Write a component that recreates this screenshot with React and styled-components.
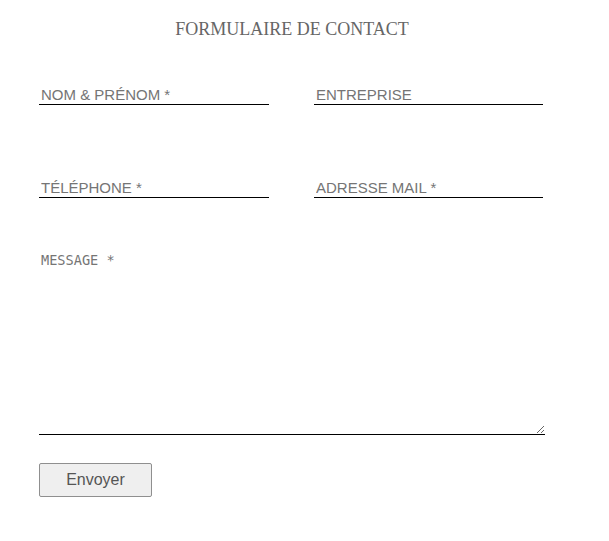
import React from 'react';
import styled, { createGlobalStyle } from 'styled-components';

const GlobalStyle = createGlobalStyle`
body {
  margin: 0;
  background: #fff;
}
`;

const Page = styled.div`
width: 506px;
padding: 17px 0 0 39px;
`;

const Title = styled.h1`
margin: 0;
font-family: "Liberation Serif", "Times New Roman", serif;
font-weight: normal;
font-size: 18px;
line-height: 24px;
color: #666;
text-align: center;
`;

const Form = styled.form`
display: flex;
flex-direction: column;
margin-top: 43px;
`;

const Row = styled.div`
display: grid;
grid-template-columns: 230px 229px;
column-gap: 45px;
margin-bottom: 72px;
`;

const Field = styled.input`
box-sizing: border-box;
width: 100%;
height: 21px;
padding: 0 2px;
border: none;
border-bottom: 1px solid #000;
outline: none;
font-family: "Liberation Sans", Arial, sans-serif;
font-size: 15px;
color: #222;
background: transparent;
&::placeholder {
  color: #757575;
}
`;

const Message = styled.textarea`
box-sizing: border-box;
width: 506px;
height: 187px;
margin-top: -22px;
padding: 4px 2px;
border: none;
border-bottom: 1px solid #000;
outline: none;
font-family: "DejaVu Sans Mono", monospace;
font-size: 13.6px;
color: #222;
&::placeholder {
  color: #757575;
}
`;

const Submit = styled.button`
align-self: flex-start;
width: 113px;
height: 34px;
margin-top: 28px;
border: 1px solid #8f8f8f;
border-radius: 2px;
background: #efefef;
font-family: "Liberation Sans", Arial, sans-serif;
font-size: 16px;
color: #555;
`;

export default function App() {
  return (
    <>
      <GlobalStyle />
      <Page>
        <Title>FORMULAIRE DE CONTACT</Title>
        <Form onSubmit={e => e.preventDefault()}>
          <Row>
            <Field placeholder="NOM & PRÉNOM *" />
            <Field placeholder="ENTREPRISE" />
          </Row>
          <Row>
            <Field placeholder="TÉLÉPHONE *" />
            <Field placeholder="ADRESSE MAIL *" />
          </Row>
          <Message placeholder="MESSAGE *" />
          <Submit type="submit">Envoyer</Submit>
        </Form>
      </Page>
    </>
  );
}
